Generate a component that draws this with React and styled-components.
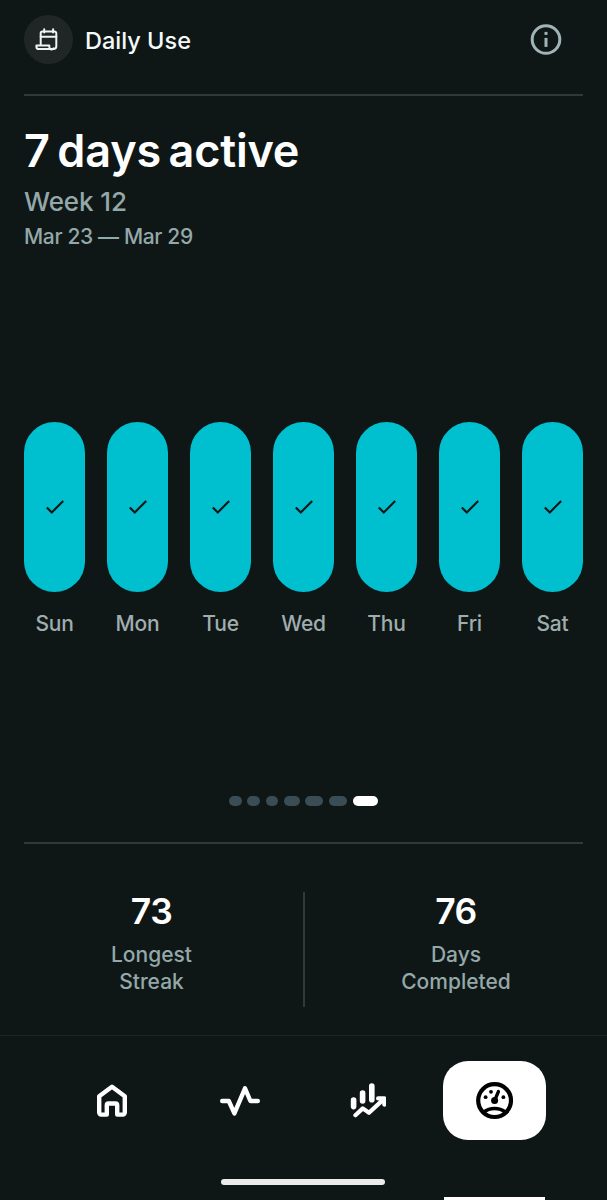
import React from "react";
import styled, { createGlobalStyle } from "styled-components";

const DAYS = ["Sun", "Mon", "Tue", "Wed", "Thu", "Fri", "Sat"];

const PAGES = [12.5, 12.5, 12.5, 15.5, 18, 18, 25];

const STATS = [
  { value: "73", label: ["Longest", "Streak"] },
  { value: "76", label: ["Days", "Completed"] },
];

const CalendarIcon = () => (
  <svg
    width="24"
    height="24"
    viewBox="0 0 24 24"
    fill="none"
    stroke="#eef3f3"
    strokeWidth="2"
    strokeLinecap="round"
    strokeLinejoin="round"
  >
    <path d="M5.7 16.7V5.2a1.8 1.8 0 0 1 1.8-1.8h12a1.8 1.8 0 0 1 1.8 1.8v13.1a2.8 2.8 0 0 1-2.8 2.8H3.8a2.4 2.4 0 0 1-2.4-2.4v-1.1h12.9v1.1a2.3 2.3 0 0 0 4.2 1.6" />
    <path d="M5.7 8.8h15.6M9.2 1.2v3.2M18.1 1.2v3.2" />
  </svg>
);

const InfoIcon = () => (
  <svg width="32" height="32" viewBox="0 0 32 32" fill="#a0b3b6">
    <circle
      cx="16"
      cy="16.5"
      r="13.8"
      fill="none"
      stroke="#a0b3b6"
      strokeWidth="3"
    />
    <rect x="14.5" y="8.9" width="3" height="3" />
    <rect x="14.5" y="14.9" width="3" height="9" />
  </svg>
);

const CheckIcon = () => (
  <svg
    width="18"
    height="14"
    viewBox="0 0 18 14"
    fill="none"
    stroke="#0e1716"
    strokeWidth="2.1"
  >
    <path d="M0.8 7.4l5 5L17.2 1" />
  </svg>
);

const HomeIcon = () => (
  <svg
    width="32"
    height="33"
    viewBox="0 0 32 33"
    fill="none"
    stroke="#fff"
    strokeWidth="4.4"
    strokeLinejoin="round"
  >
    <path d="M2.2 12.2L15 2.8l12.8 9.4v16.4a2 2 0 0 1-2 2h-5.6v-9.4a1.7 1.7 0 0 0-1.7-1.7h-7a1.7 1.7 0 0 0-1.7 1.7v9.4H4.2a2 2 0 0 1-2-2z" />
  </svg>
);

const PulseIcon = () => (
  <svg
    width="40"
    height="30"
    viewBox="0 0 40 30"
    fill="none"
    stroke="#fff"
    strokeWidth="4.4"
    strokeLinecap="round"
    strokeLinejoin="round"
  >
    <path d="M2.2 15h6.6l5.6 12.4L25 2.4 30.4 15h7.4" />
  </svg>
);

const TrendIcon = () => (
  <svg
    width="36"
    height="36"
    viewBox="0 0 36 36"
    fill="none"
    stroke="#fff"
    strokeWidth="4.2"
    strokeLinecap="round"
    strokeLinejoin="round"
  >
    <path d="M3.6 17v6.6M12.6 10v8M21.8 3v13.8" strokeWidth="5.6" />
    <path d="M5.4 32.2l7.4-6.8 6.2 4.4L33.2 16.6" />
    <path d="M28.1 15.4h6.2v6.2" />
  </svg>
);

const GaugeIcon = () => (
  <svg width="38" height="38" viewBox="0 0 38 38" fill="#000">
    <circle
      cx="18.6"
      cy="18.6"
      r="16.4"
      fill="none"
      stroke="#000"
      strokeWidth="4.2"
    />
    <path
      d="M7.6 30.2c6.4-5 15.6-5 22 0"
      fill="none"
      stroke="#000"
      strokeWidth="3.4"
    />
    <circle cx="18.6" cy="18.4" r="3.5" />
    <path
      d="M18.6 18.6l3.8-9"
      stroke="#000"
      strokeWidth="3.4"
      strokeLinecap="round"
    />
    <circle cx="9.6" cy="15.2" r="1.9" />
    <circle cx="15" cy="9.8" r="1.9" />
    <circle cx="27.4" cy="15.2" r="1.9" />
  </svg>
);

const NAV = [
  { name: "Home", Icon: HomeIcon },
  { name: "Activity", Icon: PulseIcon },
  { name: "Trends", Icon: TrendIcon },
  { name: "Usage", Icon: GaugeIcon, active: true },
];

export default function App() {
  return (
    <>
      <GlobalStyle />
      <Screen>
        <Header>
          <Badge>
            <CalendarIcon />
          </Badge>
          <HeaderTitle>Daily Use</HeaderTitle>
          <InfoButton aria-label="Info">
            <InfoIcon />
          </InfoButton>
        </Header>
        <Summary>
          <Heading>7 days active</Heading>
          <Week>Week 12</Week>
          <Range>Mar 23 — Mar 29</Range>
        </Summary>
        <Chart>
          {DAYS.map((day) => (
            <Day key={day}>
              <Bar>
                <CheckIcon />
              </Bar>
              <DayLabel>{day}</DayLabel>
            </Day>
          ))}
        </Chart>
        <Pager>
          {PAGES.map((width, i) => (
            <Dot key={i} $width={width} $active={i === PAGES.length - 1} />
          ))}
        </Pager>
        <Stats>
          {STATS.map(({ value, label }) => (
            <Stat key={value}>
              <StatValue>{value}</StatValue>
              {label.map((line) => (
                <StatLabel key={line}>{line}</StatLabel>
              ))}
            </Stat>
          ))}
        </Stats>
        <Footer>
          <Nav>
            {NAV.map(({ name, Icon, active }) => (
              <NavItem key={name} aria-label={name} $active={active}>
                <Icon />
              </NavItem>
            ))}
          </Nav>
          <HomeIndicator />
          <NextEdge />
        </Footer>
      </Screen>
    </>
  );
}

const GlobalStyle = createGlobalStyle`
  * {
    box-sizing: border-box;
  }

  body {
    margin: 0;
    background: #0e1716;
    font-family: Inter, "Liberation Sans", sans-serif;
  }

  svg {
    display: block;
    flex-shrink: 0;
  }
`;

const Screen = styled.div`
  width: 607px;
  height: 1200px;
  display: flex;
  flex-direction: column;
  overflow: hidden;
  background: #0e1716;
`;

const Header = styled.header`
  height: 96px;
  margin: 0 24px;
  padding: 15px 21px 0 0;
  display: flex;
  align-items: flex-start;
  border-bottom: 2px solid #303938;
`;

const Badge = styled.div`
  width: 49px;
  height: 49px;
  padding-right: 4px;
  display: flex;
  align-items: center;
  justify-content: center;
  border-radius: 50%;
  background: #1f2625;
`;

const HeaderTitle = styled.span`
  margin-left: 12px;
  color: #f4f9f9;
  font-size: 23.5px;
  font-weight: 500;
  line-height: 51px;
`;

const InfoButton = styled.button`
  margin: 8px 0 0 auto;
  padding: 0;
  border: none;
  background: none;
`;

const Summary = styled.section`
  height: 326px;
  padding: 28px 24px 0;
  color: #94a8a9;
  white-space: nowrap;
`;

const Heading = styled.h1`
  margin: 0;
  color: #fff;
  font-size: 45px;
  font-weight: 600;
  letter-spacing: -0.2px;
  line-height: 54px;
  word-spacing: -3.5px;
`;

const Week = styled.div`
  font-size: 26px;
  font-weight: 500;
  letter-spacing: -0.1px;
  line-height: 47px;
`;

const Range = styled.div`
  font-size: 21px;
  font-weight: 500;
  letter-spacing: -0.35px;
  line-height: 24px;
`;

const Chart = styled.section`
  height: 374px;
  padding: 0 24px;
  display: flex;
  gap: 22px;
`;

const Day = styled.div`
  width: 61px;
  display: flex;
  flex-direction: column;
  align-items: center;
`;

const Bar = styled.div`
  width: 61px;
  height: 170px;
  display: flex;
  align-items: center;
  justify-content: center;
  border-radius: 31px;
  background: #00bfce;
`;

const DayLabel = styled.span`
  margin-top: 18px;
  color: #a0adae;
  font-size: 21px;
  font-weight: 500;
  letter-spacing: -0.2px;
  line-height: 28px;
`;

const Pager = styled.div`
  height: 48px;
  margin: 0 24px;
  display: flex;
  justify-content: center;
  gap: 5.8px;
  border-bottom: 2px solid #303938;
`;

const Dot = styled.span`
  width: ${({ $width }) => $width}px;
  height: 10px;
  border-radius: 5px;
  background: ${({ $active }) => ($active ? "#fff" : "#3a4d54")};
`;

const Stats = styled.section`
  height: 191px;
  padding-top: 48px;
  display: flex;
`;

const Stat = styled.div`
  width: 303px;
  height: 115px;
  display: flex;
  flex-direction: column;
  align-items: center;

  & + & {
    width: 304px;
    border-left: 2px solid #303938;
  }
`;

const StatValue = styled.strong`
  margin-bottom: 9px;
  color: #fff;
  font-size: 35.5px;
  font-weight: 600;
  letter-spacing: -0.5px;
  line-height: 40px;
`;

const StatLabel = styled.span`
  color: #94a8a9;
  font-size: 21px;
  font-weight: 500;
  line-height: 27px;
`;

const Footer = styled.footer`
  height: 165px;
  display: flex;
  flex-direction: column;
  border-top: 1px solid #1c2524;
`;

const Nav = styled.nav`
  height: 143px;
  padding: 25px 61px 0;
  display: flex;
  justify-content: space-between;
`;

const NavItem = styled.button`
  width: 103px;
  height: 79px;
  padding: 0 0 0 1px;
  display: flex;
  align-items: center;
  justify-content: center;
  border: none;
  border-radius: 25px;
  background: ${({ $active }) => ($active ? "#fff" : "transparent")};
`;

const HomeIndicator = styled.div`
  width: 164px;
  height: 6px;
  margin: 0 0 12px 221px;
  border-radius: 3px;
  background: #ebebeb;
`;

const NextEdge = styled.div`
  width: 101px;
  height: 3px;
  margin-left: 444px;
  background: #fff;
`;
